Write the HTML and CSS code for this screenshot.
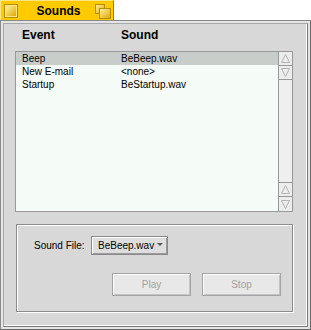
FILE: index.html
```html
<!DOCTYPE html>
<html lang="en">
  <head>
    <meta charset="UTF-8" />
    <title>Sounds</title>
    <link rel="stylesheet" href="styles.css">
  </head>
  <body>
    <!-- Title tab -->
    <div class="tab">
      <svg class="close-box" width="14" height="14" viewBox="0 0 14 14">
        <defs>
          <linearGradient id="cb" x1="0" y1="0" x2="1" y2="1">
            <stop offset="0" stop-color="#fff3a0" />
            <stop offset="1" stop-color="#e3a500" />
          </linearGradient>
        </defs>
        <rect x="0.5" y="0.5" width="13" height="13" fill="#ffe680" stroke="#b38f00" />
        <rect x="2" y="2" width="10" height="10" fill="url(#cb)" />
      </svg>
      <span class="title">Sounds</span>
      <svg class="zoom-box" width="16" height="15" viewBox="0 0 16 15">
        <defs>
          <linearGradient id="zb" x1="0" y1="0" x2="1" y2="1">
            <stop offset="0" stop-color="#fff3a0" />
            <stop offset="1" stop-color="#e3a500" />
          </linearGradient>
        </defs>
        <rect x="0.5" y="0.5" width="9" height="9" fill="url(#zb)" stroke="#b38f00" />
        <rect x="4.5" y="4.5" width="11" height="10" fill="url(#zb)" stroke="#b38f00" />
      </svg>
    </div>

    <div class="window">
      <div class="pane">
        <div class="columns">
          <span class="col-event">Event</span>
          <span class="col-sound">Sound</span>
        </div>

        <div class="list">
          <div class="rows">
            <div class="row selected"><span class="c1">Beep</span><span>BeBeep.wav</span></div>
            <div class="row"><span class="c1">New E-mail</span><span>&lt;none&gt;</span></div>
            <div class="row"><span class="c1">Startup</span><span>BeStartup.wav</span></div>
          </div>
          <div class="scrollbar">
            <div class="arrow">
              <svg width="13" height="13" viewBox="0 0 13 13"><polygon points="6.5,2.5 2.5,10.5 10.5,10.5" /></svg>
            </div>
            <div class="arrow">
              <svg width="13" height="13" viewBox="0 0 13 13"><polygon points="2.5,2.5 10.5,2.5 6.5,10.5" /></svg>
            </div>
            <div class="track"></div>
            <div class="arrow">
              <svg width="13" height="13" viewBox="0 0 13 13"><polygon points="6.5,2.5 2.5,10.5 10.5,10.5" /></svg>
            </div>
            <div class="arrow last">
              <svg width="13" height="13" viewBox="0 0 13 13"><polygon points="2.5,2.5 10.5,2.5 6.5,10.5" /></svg>
            </div>
          </div>
        </div>

        <div class="file-box">
          <div class="file-row">
            <span class="file-label">Sound File:</span>
            <button class="popup">
              BeBeep.wav
              <svg width="6" height="4" viewBox="0 0 6 4"><polygon points="0,0 6,0 3,3" /></svg>
            </button>
          </div>
          <div class="buttons">
            <button class="btn" disabled>Play</button>
            <button class="btn" disabled>Stop</button>
          </div>
        </div>
      </div>
    </div>
  </body>
</html>
```

FILE: styles.css
```css
:root {
  --tab-yellow: #ffcb00;
  --panel: #d8d8d8;
  --line: #989898;
  --list-bg: #f5fbf7;
  --selected: #c9cdc9;
  --text: #000000;
  --disabled: #a0a0a0;
}

* {
  margin: 0;
  padding: 0;
  box-sizing: border-box;
}

body {
  background: #ffffff;
  font-family: "Liberation Sans", Arial, sans-serif;
  font-size: 10px;
  color: var(--text);
  width: 311px;
  height: 330px;
  overflow: hidden;
}

/* Title tab */
.tab {
  width: 114px;
  height: 20px;
  background: var(--tab-yellow);
  border-top: 1px solid #ffe680;
  border-left: 1px solid #ffe680;
  border-right: 1px solid #9c7c00;
  display: flex;
  align-items: center;
  padding: 0 2px 0 3px;
}

.close-box {
  display: block;
  flex: none;
}

.title {
  flex: 1;
  text-align: center;
  font-size: 12px;
  font-weight: bold;
  padding-left: 4px;
}

.zoom-box {
  display: block;
  flex: none;
  margin-top: 2px;
}

/* Window frame */
.window {
  width: 311px;
  height: 310px;
  border: 1px solid #8a8a8a;
  border-right-color: #6a6a6a;
  border-bottom-color: #6a6a6a;
  background: #e4e4e4;
  padding: 2px;
}

.pane {
  height: 100%;
  background: var(--panel);
  border: 1px solid #a8a8a8;
  border-right-color: #7a7a7a;
  border-bottom-color: #7a7a7a;
  box-shadow: inset -1px -1px 0 #ffffff;
}

.columns {
  height: 27px;
  display: flex;
  padding: 5px 0 0 18px;
  font-size: 12px;
  font-weight: bold;
  line-height: 12px;
}

.col-event {
  width: 99px;
}

/* List */
.list {
  margin-left: 11px;
  width: 278px;
  height: 161px;
  display: flex;
  border: 1px solid var(--line);
  background: var(--list-bg);
}

.rows {
  flex: 1;
}

.row {
  height: 13px;
  line-height: 13px;
  display: flex;
  padding-left: 6px;
}

.row.selected {
  background: var(--selected);
}

.c1 {
  width: 99px;
}

.scrollbar {
  width: 14px;
  display: flex;
  flex-direction: column;
  border-left: 1px solid var(--line);
  background: #efefef;
}

.arrow {
  height: 14px;
  border-bottom: 1px solid var(--line);
  background: #ececec;
  display: flex;
  align-items: center;
  justify-content: center;
}

.arrow.last {
  border-bottom: none;
}

.arrow polygon {
  fill: none;
  stroke: #b4b4b4;
}

.track {
  flex: 1;
  border-bottom: 1px solid var(--line);
}

/* Sound file box */
.file-box {
  margin: 12px 0 0 12px;
  width: 277px;
  height: 88px;
  border: 1px solid #8c8c8c;
  box-shadow: 1px 1px 0 #ffffff, inset 1px 1px 0 #ffffff;
  padding: 11px 11px 0 17px;
}

.file-row {
  display: flex;
  align-items: center;
  height: 18px;
}

.file-label {
  width: 57px;
}

.popup {
  width: 77px;
  height: 19px;
  font-family: inherit;
  font-size: 10px;
  color: var(--text);
  background: #dedede;
  border: 1px solid #8a8a8a;
  box-shadow: inset 1px 1px 0 #ffffff, inset -1px -1px 0 #9a9a9a;
  display: flex;
  align-items: center;
  padding-left: 6px;
  gap: 3px;
}

.popup polygon {
  fill: #555555;
}

.buttons {
  display: flex;
  justify-content: flex-end;
  gap: 11px;
  margin-top: 19px;
}

.btn {
  width: 79px;
  height: 23px;
  font-family: inherit;
  font-size: 10px;
  color: var(--disabled);
  background: #e8e8e8;
  border: 1px solid #a4a4a4;
  box-shadow: inset 1px 1px 0 #ffffff, inset -1px -1px 0 #c4c4c4;
}
```
